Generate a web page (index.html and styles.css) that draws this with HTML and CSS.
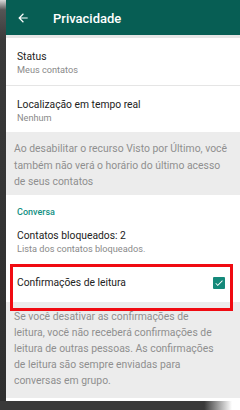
FILE: index.html
```html
<!DOCTYPE html>
<html lang="pt">
<head>
<meta charset="utf-8">
<link rel="stylesheet" href="styles.css">
</head>
<body>
<div class="device">
  <div class="edge"></div>
  <div class="screen">
    <header class="appbar">
      <svg class="back" width="14" height="14" viewBox="0 0 24 24"><path d="M20 11H7.83l5.59-5.59L12 4l-8 8 8 8 1.41-1.41L7.83 13H20v-2z" fill="#fff"/></svg>
      <span class="title">Privacidade</span>
    </header>
    <div class="item">
      <div class="primary">Status</div>
      <div class="secondary">Meus contatos</div>
    </div>
    <div class="item divided">
      <div class="primary">Localização em tempo real</div>
      <div class="secondary">Nenhum</div>
    </div>
    <div class="note">Ao desabilitar o recurso Visto por Último, você também não verá o horário do último acesso de seus contatos</div>
    <div class="section">Conversa</div>
    <div class="item">
      <div class="primary">Contatos bloqueados: 2</div>
      <div class="secondary">Lista dos contatos bloqueados.</div>
    </div>
    <div class="item check-row">
      <div class="primary">Confirmações de leitura</div>
      <span class="checkbox"><svg width="10" height="10" viewBox="0 0 24 24"><path d="M9 16.2L4.8 12l-1.4 1.4L9 19 21 7l-1.4-1.4L9 16.2z" fill="#fff"/></svg></span>
      <div class="highlight"></div>
    </div>
    <div class="note last">Se você desativar as confirmações de leitura, você não receberá confirmações de leitura de outras pessoas. As confirmações de leitura são sempre enviadas para conversas em grupo.</div>
  </div>
</div>
<div class="shadow"></div>
</body>
</html>
```
FILE: styles.css
```css
* { box-sizing: border-box; }
html, body { margin: 0; padding: 0; background: #fff; }
body { width: 240px; height: 410px; overflow: hidden; font-family: Roboto, "Liberation Sans", sans-serif; }
.device { display: flex; height: 401px; }
.edge { width: 6px; flex: none; background: linear-gradient(to bottom, #d8d8d8 0, #555 10px, #3a3a3a 40px, #2e2e2e 100%); }
.screen { flex: 1; display: flex; flex-direction: column; background: #fff; padding-bottom: 3px; }
.appbar { height: 38px; flex: none; background: #075e54; display: flex; align-items: center; padding-left: 10px; gap: 23px; border-bottom: 3px solid #e6e6e6; padding-top: 1px; }
.back { flex: none; }
.title { color: #fff; font-size: 13px; font-weight: 500; }
.item { padding: 12px 10px 0 11px; height: 47px; flex: none; position: relative; }
.divided { border-top: 1px solid #e5e5e5; padding-top: 12px; }
.primary { font-size: 10.3px; color: #222; line-height: 14px; }
.secondary { font-size: 9.2px; color: #8a8a8a; line-height: 12px; }
.note { background: #ececec; color: #8f8f8f; font-size: 10.4px; line-height: 16.5px; padding: 9px 12px 4px 8px; flex: none; }
.section { color: #119083; font-size: 9px; font-weight: 500; line-height: 12px; padding: 11px 11px 0; height: 22px; flex: none; }
.check-row { display: flex; justify-content: space-between; align-items: center; padding-top: 0; height: 38px; padding-right: 15px; }
.checkbox { width: 12px; height: 12px; background: #15897a; display: flex; align-items: center; justify-content: center; border-radius: 1px; }
.highlight { position: absolute; left: 4px; right: 7px; top: 0; bottom: -9px; border: 3px solid #f00b12; }
.note.last { flex: 1; padding-top: 7px; line-height: 16px; padding-right: 20px; }
.shadow { height: 9px; width: 232px; background: linear-gradient(to right, #3a3a3a 88%, #fff); }
```
